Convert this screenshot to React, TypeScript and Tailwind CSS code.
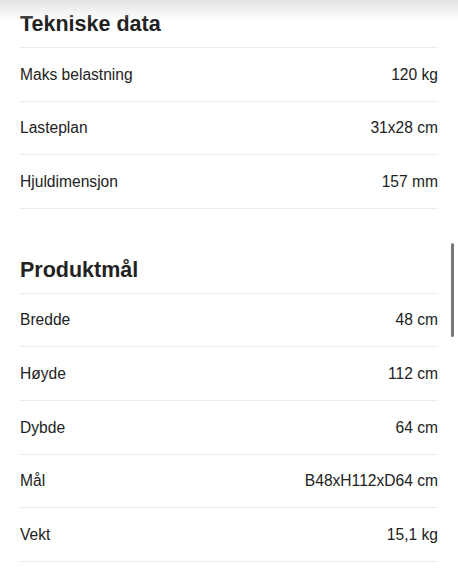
import React from "react";

const sections = [
  {
    title: "Tekniske data",
    rows: [
      ["Maks belastning", "120 kg"],
      ["Lasteplan", "31x28 cm"],
      ["Hjuldimensjon", "157 mm"],
    ],
  },
  {
    title: "Produktmål",
    rows: [
      ["Bredde", "48 cm"],
      ["Høyde", "112 cm"],
      ["Dybde", "64 cm"],
      ["Mål", "B48xH112xD64 cm"],
      ["Vekt", "15,1 kg"],
    ],
  },
];

export default function App() {
  return (
    <div className="relative w-[458px] h-[575px] overflow-hidden bg-white text-[#222] font-['Liberation_Sans',Arial,sans-serif]">
      <div className="pointer-events-none absolute inset-x-0 top-0 h-[20px] bg-gradient-to-b from-[#e2e2e2] to-[#ffffff00]" />
      <div className="absolute right-[4px] top-[243px] w-[3px] h-[94px] rounded-full bg-[#777]" />
      <div className="px-[20px] w-[458px] box-border">
        {sections.map((s, i) => (
          <div key={s.title} className={i === 0 ? "" : "mt-[37px]"}>
            <div className="h-[48px] flex items-center border-b border-[#ececec] pt-[3px]">
              <h2 className="text-[21.5px] font-bold leading-none font-['Liberation_Sans',Arial,sans-serif]">
                {s.title}
              </h2>
            </div>
            {s.rows.map(([k, v]) => (
              <div
                key={k}
                className="h-[53.6px] flex items-center justify-between border-b border-[#ececec] text-[15.6px]"
              >
                <span>{k}</span>
                <span>{v}</span>
              </div>
            ))}
          </div>
        ))}
      </div>
    </div>
  );
}
